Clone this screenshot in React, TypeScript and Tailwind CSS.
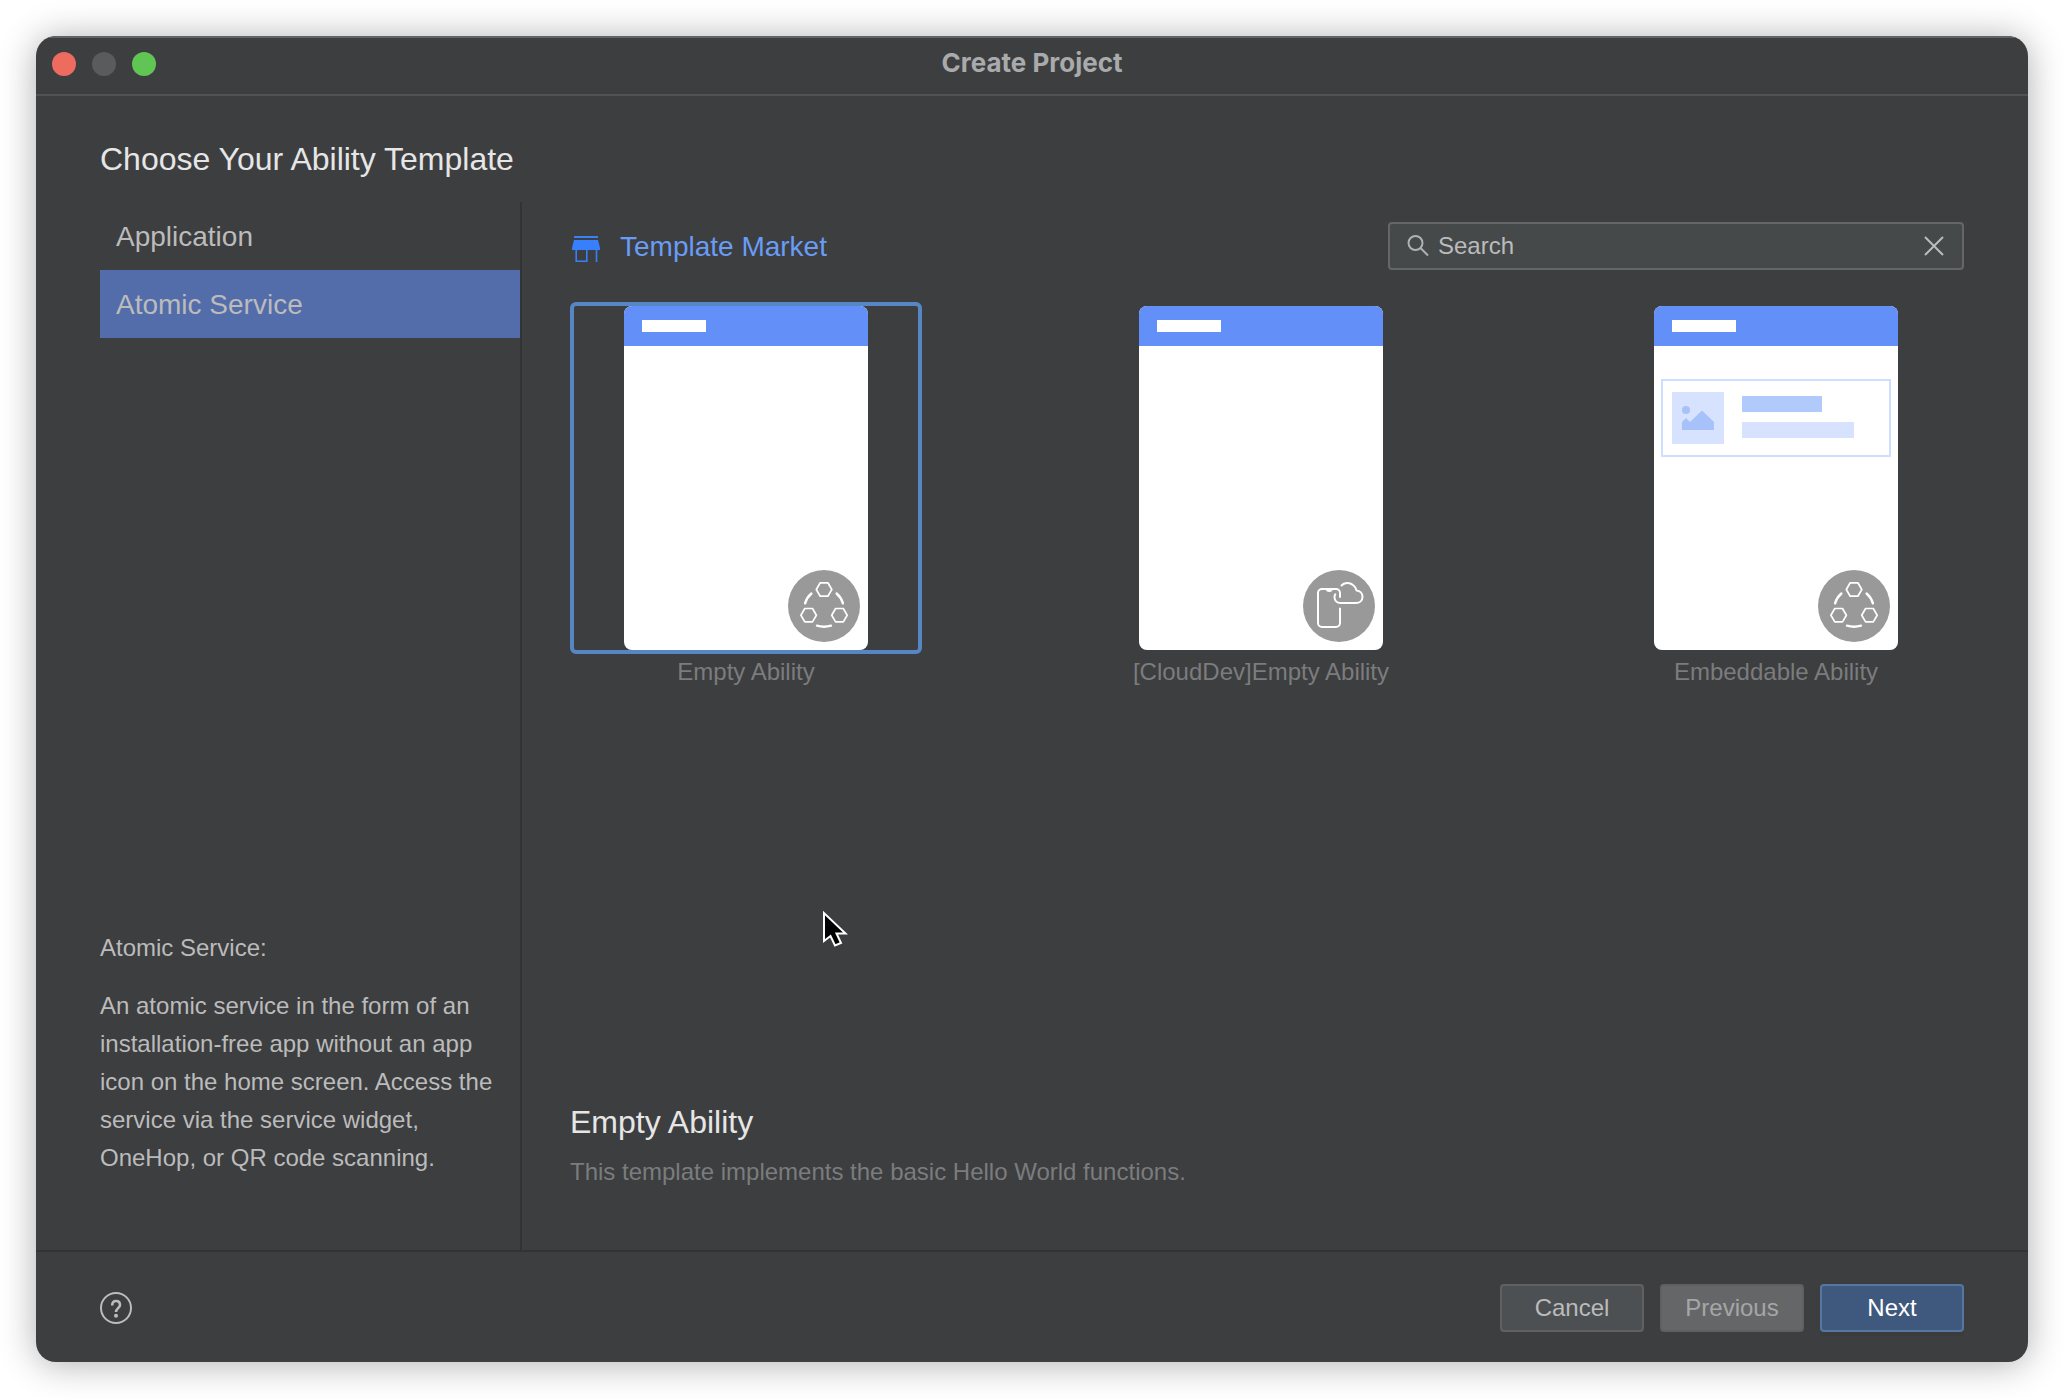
import { useState } from "react";
import type { ReactNode } from "react";

const categories = [
  {
    name: "Application",
    desc: "An application that is installed on the device and has an app icon on the home screen.",
  },
  {
    name: "Atomic Service",
    desc: "An atomic service in the form of an installation-free app without an app icon on the home screen. Access the service via the service widget, OneHop, or QR code scanning.",
  },
];

const templates = [
  { name: "Empty Ability", badge: "atomic", desc: "This template implements the basic Hello World functions." },
  { name: "[CloudDev]Empty Ability", badge: "cloud", desc: "This template implements the basic device-cloud functions." },
  { name: "Embeddable Ability", badge: "atomic", desc: "This template implements an embeddable ability." },
];

function StoreIcon() {
  return (
    <svg className="mt-1 h-7 w-7" viewBox="0 0 28 28" fill="none" aria-hidden="true">
      <rect x="2" y="1" width="24" height="2" fill="#3880fb" />
      <path d="M2 5h24l2 8v2H0v-2z" fill="#3880fb" />
      <path d="M4.200 15v11.300h10.600V15M24.500 15v12" stroke="#3880fb" strokeWidth="1.600" />
    </svg>
  );
}

function AtomicBadge() {
  return (
    <svg className="h-18 w-18" viewBox="0 0 72 72" fill="none" aria-hidden="true">
      <circle cx="36" cy="36" r="36" fill="#999" />
      <g stroke="#fff" strokeWidth="1.700" strokeLinejoin="round">
        <path d="M28.300 19.500l3.900-6.700h7.700l3.900 6.700-3.900 6.700h-7.700z" />
        <path d="M12.900 45.200l3.900-6.700h7.700l3.900 6.700-3.900 6.700h-7.700z" />
        <path d="M43.700 45.200l3.900-6.700h7.700l3.900 6.700-3.900 6.700h-7.700z" />
      </g>
      <g stroke="#fff" strokeWidth="2.400" strokeLinecap="round">
        <path d="M23.400 23.500a20 20 0 0 0-6.300 9.800" />
        <path d="M48.600 23.500a20 20 0 0 1 6.300 9.800" />
        <path d="M29 55.700a25 25 0 0 0 14 0" />
      </g>
    </svg>
  );
}

function CloudBadge() {
  return (
    <svg className="h-18 w-18" viewBox="0 0 72 72" fill="none" aria-hidden="true">
      <circle cx="36" cy="36" r="36" fill="#999" />
      <g stroke="#fff" strokeWidth="2" strokeLinecap="round" strokeLinejoin="round">
        <path d="M37 38.500V53a4 4 0 0 1-4 4H19a4 4 0 0 1-4-4V23a4 4 0 0 1 4-4h14a4 4 0 0 1 4 4v4" />
        <path d="M38.500 15.500c2.500-3 8-3.500 11.500-.5 2 1.500 3 3.300 3.400 5.400 3.600.2 6.100 3 6.100 6.300 0 3.700-2.800 6.300-6.500 6.300H37.500c-3.500 0-6-2.500-6-5.800 0-1 .2-2 .8-2.900" />
      </g>
      <path d="M22.500 19h7.500c-.5 2-1.500 3-3.700 3s-3.300-1-3.800-3z" fill="#fff" />
    </svg>
  );
}

function EmbeddedCard() {
  return (
    <div className="mx-[7px] mt-[33px] flex h-[78px] items-center gap-[18px] border-2 border-[#cfdefe] pl-[9px]">
      <svg className="h-[52px] w-[52px]" viewBox="0 0 52 52" aria-hidden="true">
        <rect width="52" height="52" fill="#d7e3fe" />
        <circle cx="14" cy="18" r="4" fill="#a7c1fa" />
        <path d="M10 38v-8l4-4 4 4 12-11.500L42 30v8z" fill="#a7c1fa" />
      </svg>
      <div className="flex flex-col gap-[10px] pb-0.5">
        <div className="h-4 w-20 bg-[#b0cbfb]" />
        <div className="h-4 w-28 bg-[#d7e3fe]" />
      </div>
    </div>
  );
}

function Preview({ badge, children }: { badge: string; children?: ReactNode }) {
  return (
    <div className="relative h-[344px] w-[244px] overflow-hidden rounded-lg bg-white">
      <div className="flex h-10 items-center bg-[#628ff8] px-[18px]">
        <div className="h-3 w-16 bg-white" />
      </div>
      {children}
      <div className="absolute right-2 bottom-2">{badge === "cloud" ? <CloudBadge /> : <AtomicBadge />}</div>
    </div>
  );
}

export default function App() {
  const [category, setCategory] = useState("Atomic Service");
  const [template, setTemplate] = useState("Empty Ability");
  const [query, setQuery] = useState("");

  const currentCategory = categories.find((c) => c.name === category)!;
  const currentTemplate = templates.find((t) => t.name === template)!;

  return (
    <div className="relative flex min-h-screen bg-white p-9 font-['Liberation_Sans',Arial,sans-serif] text-[#bbbbbb]">
      <div className="flex flex-1 flex-col overflow-hidden rounded-[20px] bg-[#3d3e40] shadow-[0_2px_36px_rgba(0,0,0,0.32)]">
        <header className="grid h-[60px] grid-cols-[1fr_auto_1fr] items-center border-t-2 border-b-2 border-t-[#626365] border-b-[#515254] px-4 pb-1">
          <div className="flex gap-4">
            <button aria-label="Close" className="h-6 w-6 rounded-full bg-[#ed6b5f]" />
            <button aria-label="Minimize" className="h-6 w-6 rounded-full bg-[#5a5b5d]" disabled />
            <button aria-label="Zoom" className="h-6 w-6 rounded-full bg-[#61c554]" />
          </div>
          <h1 className="pb-0.5 font-[Inter,sans-serif] text-[26px] leading-8 font-bold text-[#a9aaab]">Create Project</h1>
        </header>

        <main className="flex flex-1 flex-col">
          <h2 className="px-16 pt-[43px] pb-[23px] text-[32px] leading-10 text-[#e6e6e6]">Choose Your Ability Template</h2>
          <div className="flex flex-1">
            <aside className="ml-16 flex w-[422px] shrink-0 flex-col border-r-2 border-[#323334]">
              <nav className="flex flex-col">
                {categories.map((c) => (
                  <button
                    key={c.name}
                    onClick={() => setCategory(c.name)}
                    className={`h-[68px] px-4 pt-0.5 text-left text-[28px] ${category === c.name ? "bg-[#536dab]" : ""}`}
                  >
                    {c.name}
                  </button>
                ))}
              </nav>
              <div className="mt-auto space-y-5 pb-[73px] text-2xl leading-[38px]">
                <p>{category}:</p>
                <p className="pr-4">{currentCategory.desc}</p>
              </div>
            </aside>

            <section className="flex flex-1 flex-col pt-5 pr-16 pb-[62px] pl-12">
              <div className="flex items-center justify-between">
                <a href="#market" className="flex items-center gap-5 pt-0.5 pl-0.5 text-[28px] leading-8 text-[#699cf5]">
                  <StoreIcon />
                  Template Market
                </a>
                <div className="flex h-12 w-[576px] items-center gap-2 rounded-sm border-2 border-[#646667] bg-[#45494a] px-4">
                  <svg className="h-6 w-6 shrink-0" viewBox="0 0 24 24" fill="none" stroke="#afb1b3" strokeWidth="2" aria-hidden="true">
                    <circle cx="9.500" cy="9" r="7" />
                    <path d="M14.500 14l7.500 7.500" />
                  </svg>
                  <input
                    aria-label="Search"
                    placeholder="Search"
                    value={query}
                    onChange={(e) => setQuery(e.target.value)}
                    className="min-w-0 flex-1 bg-transparent text-2xl leading-8 outline-none placeholder:text-[#bbbbbb]"
                  />
                  <button aria-label="Clear search" onClick={() => setQuery("")}>
                    <svg className="h-6 w-6" viewBox="0 0 24 24" fill="none" stroke="#bbbcbd" strokeWidth="2" aria-hidden="true">
                      <path d="M3 3l18 18M21 3L3 21" />
                    </svg>
                  </button>
                </div>
              </div>

              <div className="mt-8 flex justify-between pr-3">
                {templates.map((t) => (
                  <button key={t.name} onClick={() => setTemplate(t.name)} className="flex w-[352px] flex-col items-stretch">
                    <span className={`flex justify-center rounded-md border-4 ${template === t.name ? "border-[#5786c5]" : "border-transparent"}`}>
                      <Preview badge={t.badge}>{t.name === "Embeddable Ability" && <EmbeddedCard />}</Preview>
                    </span>
                    <span className="mt-0.5 text-2xl leading-8 text-[#7b7c7d]">{t.name}</span>
                  </button>
                ))}
              </div>

              <div className="mt-auto">
                <h3 className="text-[32px] leading-10 text-[#e6e6e6]">{currentTemplate.name}</h3>
                <p className="mt-3.5 text-2xl leading-8 text-[#7b7c7d]">{currentTemplate.desc}</p>
              </div>
            </section>
          </div>
        </main>

        <footer className="flex h-28 items-center justify-between border-t-2 border-[#323334] px-16 pt-0.5">
          <button aria-label="Help">
            <svg className="h-8 w-8" viewBox="0 0 32 32" fill="none" stroke="#bbbcbd" strokeWidth="2" aria-hidden="true">
              <circle cx="16" cy="16" r="15" />
              <path d="M12.200 13.600c0-2.900 1.600-4.600 3.900-4.600s3.900 1.500 3.900 3.900c0 3.200-4 3.300-4 7.100" strokeWidth="2.600" />
              <circle cx="16" cy="23.800" r="2" fill="#bbbcbd" stroke="none" />
            </svg>
          </button>
          <div className="flex gap-4 text-2xl leading-8">
            <button className="h-12 w-36 rounded-sm border-2 border-[#5f6162] bg-[#4c5052]">Cancel</button>
            <button className="h-12 w-36 rounded-sm border-2 border-[#5f6061] bg-[#656668] text-[#a5a6a7]" disabled>
              Previous
            </button>
            <button className="h-12 w-36 rounded-sm border-2 border-[#56779f] bg-[#3f587e] text-white shadow-[0_4px_0_#393b3c]">Next</button>
          </div>
        </footer>
      </div>

      {/* mouse pointer */}
      <svg className="pointer-events-none absolute top-[908px] left-[820px] h-[42px] w-[30px]" viewBox="0 0 30 42" aria-hidden="true">
        <path d="M4 5v28l6.500-5 4.500 9.500 6-2.500-4.500-9.500H25.500z" fill="#000" stroke="#fff" strokeWidth="2" />
      </svg>
    </div>
  );
}
